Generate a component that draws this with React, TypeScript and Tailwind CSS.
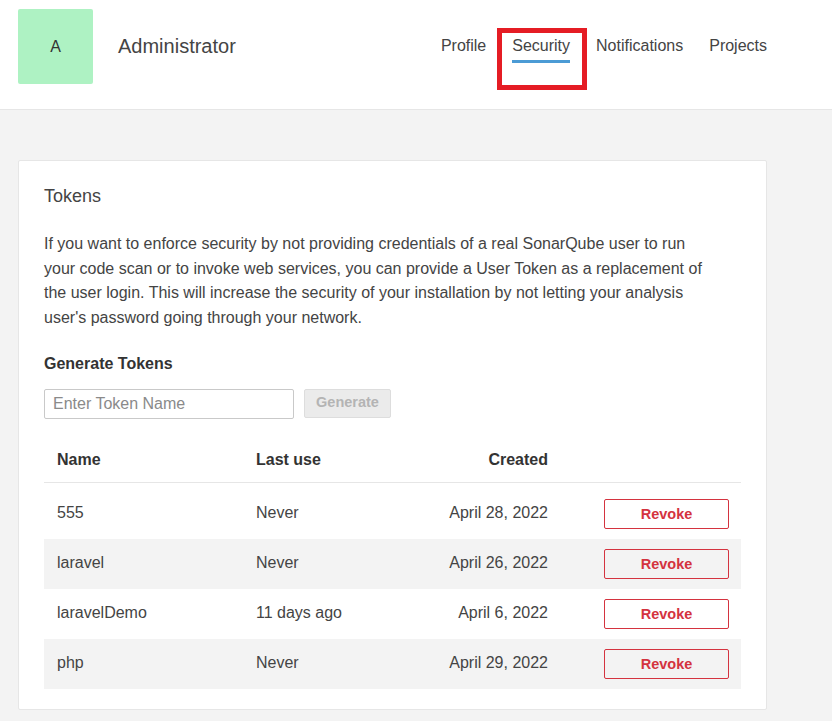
const tokens = [
  { name: '555', lastUse: 'Never', created: 'April 28, 2022' },
  { name: 'laravel', lastUse: 'Never', created: 'April 26, 2022' },
  { name: 'laravelDemo', lastUse: '11 days ago', created: 'April 6, 2022' },
  { name: 'php', lastUse: 'Never', created: 'April 29, 2022' }
];

const navItems = ['Profile', 'Security', 'Notifications', 'Projects'];

const App = () => {
  return (
    <div className="min-h-[721px] bg-[#f3f3f3] font-['Liberation_Sans',Arial,sans-serif] text-[#444]">
      <header className="h-[110px] border-b border-[#e6e6e6] bg-white">
        <div className="ml-[18px] flex w-[749px] pt-[9px]">
          <div className="flex h-[75px] w-[75px] items-center justify-center rounded-[2px] bg-[#aef2c3] text-[16px] text-[#333]">
            A
          </div>
          <div className="ml-[25px] mt-[22px] text-[20px] leading-[30px] text-[#444]">Administrator</div>
          <nav className="ml-auto mt-[25px] flex gap-[26px] text-[16px] leading-[24px]">
            {navItems.map((item) => (
              <div key={item} className="relative">
                <span>{item}</span>
                {item === 'Security' && (
                  <>
                    <div className="mt-[2px] h-[3px] bg-[#4b9bd5]" />
                    <div className="absolute -bottom-[6px] -left-[15px] -right-[17px] -top-[6px] border-[5px] border-[#e51c24]" />
                  </>
                )}
              </div>
            ))}
          </nav>
        </div>
      </header>

      <main className="ml-[18px] mt-[50px] w-[749px] rounded-[2px] border border-[#e6e6e6] bg-white px-[25px] pb-[20px] pt-[22px]">
        <h2 className="text-[18px] leading-[27px] text-[#444]">Tokens</h2>
        <p className="mt-[22px] max-w-[670px] text-[16px] leading-[24.66px] text-[#444]">
          If you want to enforce security by not providing credentials of a real SonarQube user to run your code scan or
          to invoke web services, you can provide a User Token as a replacement of the user login. This will increase the
          security of your installation by not letting your analysis user's password going through your network.
        </p>

        <h3 className="mt-[21px] text-[16px] font-bold leading-[24px] text-[#333]">Generate Tokens</h3>
        <div className="mt-[13px] flex gap-[10px]">
          <input
            type="text"
            placeholder="Enter Token Name"
            className="h-[30px] w-[250px] rounded-[2px] border border-[#c9c9c9] px-[8px] text-[16px] text-[#444] outline-none placeholder:text-[#8a8a8a]"
          />
          <button
            disabled
            className="h-[29px] w-[87px] rounded-[2px] border border-[#dddddd] bg-[#ebebeb] text-[14.5px] font-bold text-[#b4b4b4]"
          >
            Generate
          </button>
        </div>

        <div className="mt-[19px] w-[697px] text-[16px]">
          <div className="grid grid-cols-[200px_160px_156px_181px] border-b border-[#e6e6e6] pb-[10px] pt-[10px] font-bold leading-[24px] text-[#333]">
            <div className="pl-[13px]">Name</div>
            <div className="pl-[12px]">Last use</div>
            <div className="pr-[12px] text-right">Created</div>
            <div />
          </div>
          <div className="mt-[6px]">
            {tokens.map((t, i) => (
              <div
                key={t.name}
                className={`grid h-[50px] grid-cols-[200px_160px_156px_181px] items-center leading-[24px] ${i % 2 === 1 ? 'bg-[#f3f3f3]' : 'bg-white'}`}
              >
                <div className="pb-[2px] pl-[13px]">{t.name}</div>
                <div className="pb-[2px] pl-[12px]">{t.lastUse}</div>
                <div className="pb-[2px] pr-[12px] text-right">{t.created}</div>
                <div className="flex justify-end pr-[12px]">
                  <button className="h-[30px] w-[125px] rounded-[2px] border border-[#d4333f] bg-transparent text-[14.5px] font-bold text-[#d4333f]">
                    Revoke
                  </button>
                </div>
              </div>
            ))}
          </div>
        </div>
      </main>
    </div>
  );
};

export default App;
